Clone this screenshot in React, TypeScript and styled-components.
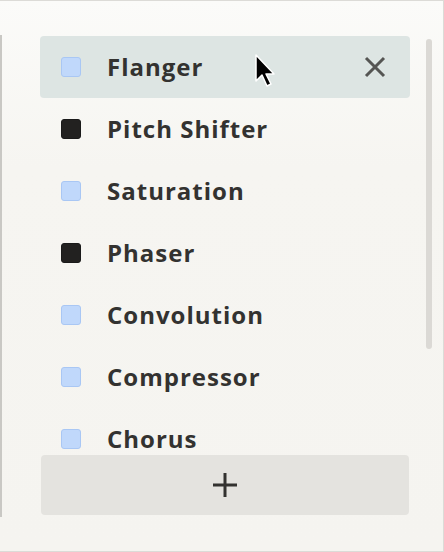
import React, { useState } from 'react';
import styled, { createGlobalStyle } from 'styled-components';

const GlobalStyle = createGlobalStyle`
  html, body { margin: 0; padding: 0; background: #f5f4f0; }
  body { font-family: "Open Sans", "Noto Sans", sans-serif; }
`;

const Panel = styled.div`
  position: relative;
  box-sizing: border-box;
  width: 444px; height: 552px;
  border: 1px solid #dcdbd7; border-left: none;
  background: linear-gradient(180deg, #fbfbf9 0%, #f6f5f1 30%, #f5f4f0 100%);
  padding: 35px 11px 0 40px;
  display: flex; flex-direction: column;
  &::before {
    content: ''; position: absolute; left: 0; top: 34px; height: 482px;
    width: 2px; background: #c9c8c4;
  }
`;
const Body = styled.div`
  display: flex; gap: 16px;
`;
const Column = styled.div`
  width: 370px; display: flex; flex-direction: column;
`;
const List = styled.ul`
  list-style: none; margin: 0; padding: 0;
  height: 419px; overflow: hidden;
`;
const Row = styled.li<{ $active?: boolean }>`
  position: relative;
  display: flex; align-items: center;
  height: 62px; box-sizing: border-box;
  padding: 0 24px 0 21px;
  border-radius: 4px;
  background: ${p => (p.$active ? '#dde5e3' : 'transparent')};
`;
const Box = styled.span<{ $on?: boolean }>`
  flex: none; width: 20px; height: 20px; box-sizing: border-box;
  border-radius: 3px;
  background: ${p => (p.$on ? '#222120' : '#c0d8fb')};
  border: 1px solid ${p => (p.$on ? '#1a1a1a' : '#a9c7f4')};
`;
const Name = styled.span`
  margin-left: 26px; flex: 1;
  font-size: 24px; font-weight: 700; letter-spacing: 1px;
  line-height: 1; margin-top: 0;
  color: #333230;
`;
const Remove = styled.button`
  border: none; background: none; padding: 0; cursor: pointer;
  width: 22px; height: 22px; display: flex;
`;
const AddButton = styled.button`
  height: 60px; width: 368px; margin-left: 1px;
  border: none; border-radius: 4px; background: #e4e3df;
  display: flex; align-items: center; justify-content: center; cursor: pointer;
`;
const Track = styled.div`
  width: 6px; padding-top: 3px;
`;
const Thumb = styled.div`
  height: 310px; border-radius: 3px; background: #dbd9d5;
`;
const Cursor = styled.svg`
  position: absolute; left: 254px; top: 52px;
`;

const effects = [
  { name: 'Flanger', on: false },
  { name: 'Pitch Shifter', on: true },
  { name: 'Saturation', on: false },
  { name: 'Phaser', on: true },
  { name: 'Convolution', on: false },
  { name: 'Compressor', on: false },
  { name: 'Chorus', on: false },
];

export default function App() {
  const [items] = useState(effects);
  return (
    <>
      <GlobalStyle />
      <Panel>
        <Body>
          <Column>
            <List>
              {items.map((e, i) => (
                <Row key={e.name} $active={i === 0}>
                  <Box $on={e.on} />
                  <Name>{e.name}</Name>
                  {i === 0 && (
                    <Remove aria-label="Remove">
                      <svg width="22" height="22" viewBox="0 0 22 22">
                        <path d="M2 2 L20 20 M20 2 L2 20" stroke="#555553" strokeWidth="3" strokeLinecap="butt" />
                      </svg>
                    </Remove>
                  )}
                </Row>
              ))}
            </List>
            <AddButton aria-label="Add">
              <svg width="24" height="24" viewBox="0 0 24 24">
                <path d="M12 0 V24 M0 12 H24" stroke="#333230" strokeWidth="3" />
              </svg>
            </AddButton>
          </Column>
          <Track>
            <Thumb />
          </Track>
        </Body>
        <Cursor width="24" height="40" viewBox="0 0 24 40">
          <path d="M2 2 L2 28 L8 22 L13 33 L17 31 L12 21 L20 21 Z" fill="#000" stroke="#fff" strokeWidth="1.5" strokeLinejoin="round" />
        </Cursor>
      </Panel>
    </>
  );
}
